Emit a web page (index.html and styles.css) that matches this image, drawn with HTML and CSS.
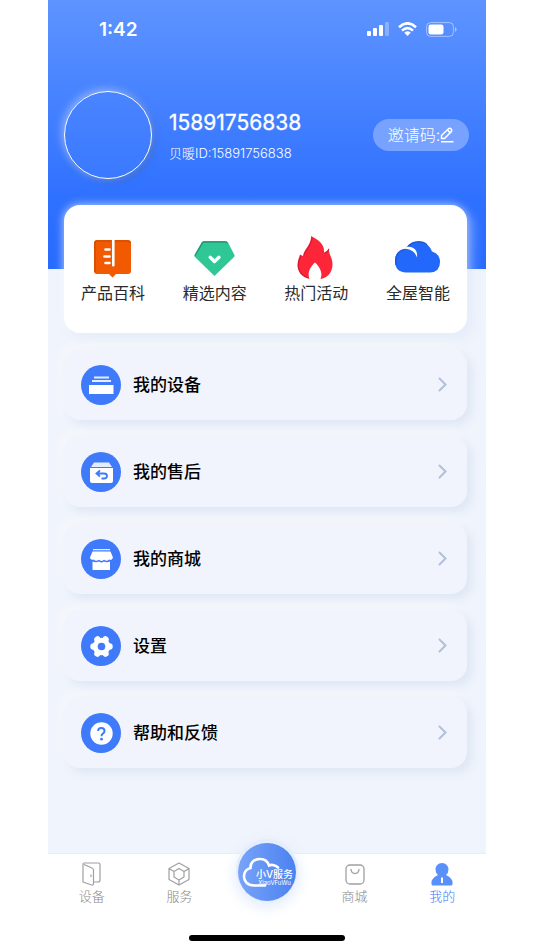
FILE: index.html
```html
<!DOCTYPE html>
<html lang="zh-CN">
<head>
<meta charset="utf-8">
<meta name="viewport" content="width=device-width, initial-scale=1">
<title>我的</title>
<link rel="stylesheet" href="styles.css">
</head>
<body>
<div class="screen">
  <header class="hero">
    <div class="status">
      <time class="clock">1:42</time>
      <div class="signals">
        <svg width="22" height="14" viewBox="0 0 22 14" fill="#fff" aria-hidden="true"><rect x="0" y="9" width="4" height="5" rx="1"/><rect x="6" y="6" width="4" height="8" rx="1"/><rect x="12" y="3" width="4" height="11" rx="1"/><rect x="18" y="0" width="4" height="14" rx="1" opacity=".3"/></svg>
        <svg width="19" height="14" viewBox="0 0 19 14" aria-hidden="true"><g fill="none" stroke="#fff" stroke-width="2.600"><path d="M1 5.200Q9.500-2.600 18 5.200"/><path d="M4 8.600Q9.500 3.600 15 8.600"/></g><path d="M6.300 10.700Q9.500 8 12.700 10.700L9.500 14Z" fill="#fff"/></svg>
        <svg width="31" height="15" viewBox="0 0 31 15" aria-hidden="true"><rect x=".6" y=".6" width="26.800" height="13.800" rx="4" fill="none" stroke="#fff" stroke-opacity=".45"/><rect x="2.500" y="2.500" width="15" height="10" rx="2.200" fill="#fff"/><path d="M29 5.200q1.600.6 1.600 2.300T29 9.800z" fill="#fff" opacity=".5"/></svg>
      </div>
    </div>
    <div class="profile">
      <div class="avatar"></div>
      <div class="who">
        <h1 class="name">15891756838</h1>
        <p class="uid">贝暖ID:15891756838</p>
      </div>
      <button class="invite" type="button">邀请码:<svg width="14" height="16" viewBox="0 0 14 16" fill="none" stroke="#fff" stroke-width="1.500" stroke-linejoin="round" aria-hidden="true"><path d="M1.500 11.500V8.500L8.500 1.700Q9.800.7 11 1.900T11.300 4.600L4.500 11.500ZM7.500 3l2.600 2.700M1 14.800h12.500"/></svg></button>
    </div>
  </header>

  <main class="content">
    <nav class="quick">
      <a class="quick-item" href="#wiki">
        <svg width="46" height="46" viewBox="0 0 46 46" aria-hidden="true"><path d="M7 4H38Q41 4 41 7V35Q41 38 38 38H26L22.500 41.500L19 38H7Q4 38 4 35V7Q4 4 7 4Z" fill="#f15a00"/><path d="M5 36V7Q5 5 7 5H21M24.500 5H38Q40 5 40 7" fill="none" stroke="#b84600" stroke-width="1.200" opacity=".75"/><rect x="22" y="3" width="2.600" height="27.500" rx="1" fill="#fff"/><path d="M15.500 13.500h4M14.500 20.500h5M15.500 27h4" stroke="#fff" stroke-width="2.600" stroke-linecap="round"/></svg>
        <span>产品百科</span>
      </a>
      <a class="quick-item" href="#picks">
        <svg width="46" height="46" viewBox="0 0 46 46" aria-hidden="true"><path d="M12 5H33.500Q35 5 36 6.500L42.500 19Q42.800 20 42 21L22.500 40L3 21Q2 20 2.500 19L9.500 6.500Q10.500 5 12 5Z" fill="#2fc796"/><path d="M3 19.500L10.500 6.800Q11 6 12 6H33.500Q34.500 6 35.500 7.500" fill="none" stroke="#229970" stroke-width="1.300"/><path d="M18.200 21.300L22.500 25.500L27 21.300" fill="none" stroke="#fff" stroke-width="3.400" stroke-linecap="round" stroke-linejoin="round"/></svg>
        <span>精选内容</span>
      </a>
      <a class="quick-item" href="#events">
        <svg width="46" height="46" viewBox="0 0 46 46" aria-hidden="true"><path d="M18 0C26 4 32 9 31 16.500C33.500 16 35 14 36 12C35.500 19 39.500 21 39.500 28C39.500 37 34 42 27.500 43C30 37 27 31 22 26.500C17 31 14 37 16.500 43C9 41 4.500 36 4.500 29C4.500 25 6 22 7 18.500L10 20C11 13 18.500 9 18 0Z" fill="#fd2638"/><path d="M8 20C2 31 7 39 15 42M11 19C13 13 19 9 19 2M32 17Q35 16 36 13" fill="none" stroke="#b91833" stroke-width="1.100" opacity=".65"/></svg>
        <span>热门活动</span>
      </a>
      <a class="quick-item" href="#home">
        <svg width="46" height="46" viewBox="0 0 46 46" aria-hidden="true"><path d="M11 36.500Q0 36 0 25Q0 14 11 12.500C15 3 32 1.500 37 15.500Q45 18 45 26Q45 36 35 36.500Z" fill="#2168fb"/><path d="M1 29C-1 19 4 14.500 10 13.500M13 10.500C18 5 27 4 32 8.500" fill="none" stroke="#164bc0" stroke-width="1.200" opacity=".7"/><path d="M10 12.800L12 11C19 10 23 15 22 21.500C20 16 17 13.500 10 12.800Z" fill="#fff"/></svg>
        <span>全屋智能</span>
      </a>
    </nav>

    <nav class="menu">
      <a class="row" href="#devices">
        <svg class="badge" viewBox="0 0 40 40" aria-hidden="true"><circle cx="20" cy="20" r="20" fill="#3f7afb"/><path d="M13 11.500h15v2H13zM11 15h19v2H11z" fill="#e3edff"/><path d="M8 20h24.500v9H8z" fill="#fff"/></svg>
        <span class="row-label">我的设备</span>
        <svg class="chevron" viewBox="0 0 9 15" aria-hidden="true"><path d="M1.500 1.500L7.500 7.500L1.500 13.500"/></svg>
      </a>
      <a class="row" href="#service">
        <svg class="badge" viewBox="0 0 40 40" aria-hidden="true"><circle cx="20" cy="20" r="20" fill="#3f7afb"/><path d="M13 10.500H28L31 15H10Z" fill="#e3edff"/><path d="M9 16H32V29Q32 31 30 31H11Q9 31 9 29Z" fill="#fff"/><path d="M19 18.500L15.500 21.500L19 24.500M16 21.500H23Q26 21.500 26 24T23 26.500H20.500" fill="none" stroke="#3f7afb" stroke-width="1.800"/></svg>
        <span class="row-label">我的售后</span>
        <svg class="chevron" viewBox="0 0 9 15" aria-hidden="true"><path d="M1.500 1.500L7.500 7.500L1.500 13.500"/></svg>
      </a>
      <a class="row" href="#mall">
        <svg class="badge" viewBox="0 0 40 40" aria-hidden="true"><circle cx="20" cy="20" r="20" fill="#3f7afb"/><path d="M12 10h17v1.300H12z" fill="#e3edff"/><path d="M11.500 12.500H29.500L32 18.500Q31 22 28 20.500Q26 22.800 23.200 20.800Q20.500 23 18 20.800Q15 22.800 12.500 20.500Q9.500 21.500 9 18.500Z" fill="#fff"/><path d="M11.500 22.500Q15 24 18 22.500Q20.500 24.500 23 22.500Q26 24 29 22.500V31H11.500Z" fill="#fff"/></svg>
        <span class="row-label">我的商城</span>
        <svg class="chevron" viewBox="0 0 9 15" aria-hidden="true"><path d="M1.500 1.500L7.500 7.500L1.500 13.500"/></svg>
      </a>
      <a class="row" href="#settings">
        <svg class="badge" viewBox="0 0 40 40" aria-hidden="true"><circle cx="20" cy="20" r="20" fill="#3f7afb"/><g stroke="#fff" stroke-width="6.500" stroke-linecap="round"><path d="M12.500 20.500h16M16.500 13.500l8 14M24.500 13.500l-8 14"/></g><circle cx="20.500" cy="20.500" r="8.800" fill="#fff"/><circle cx="20.500" cy="20.500" r="3.800" fill="#3f7afb"/></svg>
        <span class="row-label">设置</span>
        <svg class="chevron" viewBox="0 0 9 15" aria-hidden="true"><path d="M1.500 1.500L7.500 7.500L1.500 13.500"/></svg>
      </a>
      <a class="row" href="#help">
        <svg class="badge" viewBox="0 0 40 40" aria-hidden="true"><circle cx="20" cy="20" r="20" fill="#3f7afb"/><circle cx="20.500" cy="20.500" r="11.200" fill="#fff"/><path d="M17.200 18Q17 15 20.300 15Q23.500 15 23.500 18Q23.500 19.500 21.800 20.600Q20.500 21.400 20.500 23.200" fill="none" stroke="#3f7afb" stroke-width="2"/><circle cx="20.500" cy="26.200" r="1.400" fill="#3f7afb"/></svg>
        <span class="row-label">帮助和反馈</span>
        <svg class="chevron" viewBox="0 0 9 15" aria-hidden="true"><path d="M1.500 1.500L7.500 7.500L1.500 13.500"/></svg>
      </a>
    </nav>
  </main>

  <footer class="dock">
    <nav class="tabs">
      <a class="tab" href="#t1"><svg width="24" height="24" viewBox="0 0 24 24" fill="none" stroke="#a0a0a0" stroke-width="1.200" stroke-linejoin="round" aria-hidden="true"><path d="M4 1H18.500Q20 1 20 2.500V18Q20 20 18 20H14M4 1Q3 1 3 2.500V20L11.500 23Q13.500 23.500 13.500 21.500V8Q13.500 6.500 12 6L4 2.500M11 12.500v2.500"/></svg><span>设备</span></a>
      <a class="tab" href="#t2"><svg width="24" height="24" viewBox="0 0 24 24" fill="none" stroke="#a0a0a0" stroke-width="1.200" stroke-linejoin="round" aria-hidden="true"><path d="M12 1L22 6.500V17.500L12 23L2 17.500V6.500ZM12 6.500L17 9.500V15L12 18L7 15V9.500ZM2 6.500L7 9.500M22 6.500L17 9.500M12 18V23"/></svg><span>服务</span></a>
      <a class="orb" href="#v"><svg class="orb-cloud" viewBox="0 0 58 58" fill="none" stroke="#fff" stroke-width="2.600" stroke-linecap="round" aria-hidden="true"><path d="M27 42.500H16C9 42.500 6 38 6 33.500C6 28.500 9 26 12.500 25C12 19 17 16 22 16C27 16 30 19 31 22.500C34 21 38 22.500 40 24.500"/></svg><span class="orb-text"><b>小V服务</b><small>XiaoVFuWu</small></span></a>
      <a class="tab" href="#t3"><svg width="24" height="24" viewBox="0 0 24 24" fill="none" stroke="#a0a0a0" stroke-width="1.300" stroke-linecap="round" aria-hidden="true"><rect x="3" y="3" width="18" height="19" rx="4"/><path d="M8 7.500Q8.500 11.500 12 11.500T16 7.500"/></svg><span>商城</span></a>
      <a class="tab active" href="#t4" aria-current="page"><svg width="24" height="24" viewBox="0 0 24 24" aria-hidden="true"><path d="M12 1C16 1 18.500 4 18.500 7.500Q18.500 11 16 13Q20 14.500 22 18Q22.500 19 22.500 20V22Q22.500 23.500 21 23.500H3Q1.500 23.500 1.500 22V20Q1.500 19 2 18Q4 14.500 8 13Q5.500 11 5.500 7.500C5.500 4 8 1 12 1Z" fill="#5a90fa"/><path d="M11 15.500h2v5.500h-2z" fill="#fff"/></svg><span>我的</span></a>
    </nav>
    <div class="home-bar"></div>
  </footer>
</div>
</body>
</html>
```
FILE: styles.css
```css
* { box-sizing: border-box; }

body {
  margin: 0;
  padding: 0 48px;
  background: #fff;
  font-family: Inter, "Noto Sans CJK SC", sans-serif;
  color: #2a2a2a;
}

a { color: inherit; text-decoration: none; }
svg { display: block; flex: none; }

.screen {
  min-height: 100vh;
  display: flex;
  flex-direction: column;
  background: #f0f4fc;
}

.hero {
  padding: 0 17px 90px 16px;
  background: linear-gradient(#5e94ff, #2e70ff 75%, #286bff);
  color: #fff;
}

.status {
  display: flex;
  align-items: center;
  justify-content: space-between;
  height: 58px;
  padding: 0 12px 0 35px;
}

.clock { font-size: 19px; font-weight: 600; }
.signals { display: flex; align-items: center; gap: 9px; }

.profile {
  display: flex;
  align-items: center;
  padding-top: 33px;
}

.avatar {
  width: 88px;
  height: 88px;
  flex: none;
  border: 1px solid #fff;
  border-radius: 50%;
  background: linear-gradient(#4a85ff, #3a79ff);
  box-shadow: -2px -2px 8px #8fb4ff, 2px 2px 8px #3a68c8;
}

.who { flex: 1; margin-left: 17px; padding-top: 2px; }
.name { margin: 0; font-size: 21px; line-height: 28px; font-weight: 400; -webkit-text-stroke: 0.3px #fff; }
.uid { margin: 6px 0 0; font-size: 13px; line-height: 20px; font-weight: 300; }

.invite {
  display: flex;
  align-items: center;
  justify-content: center;
  width: 96px;
  height: 32px;
  padding: 0;
  border: 0;
  border-radius: 16px;
  background: #77a2ff;
  color: #fff;
  font: 300 16px/24px Inter, "Noto Sans CJK SC", sans-serif;
  white-space: nowrap;
}

.content { padding: 0 19px 16px 16px; }

.quick {
  display: flex;
  justify-content: space-between;
  height: 128px;
  margin-top: -64px;
  padding: 31px 17px 0;
  border-radius: 16px;
  background: #fff;
  box-shadow: 6px 6px 12px #d4e0f566, -1px -1px 8px #ffffff90;
}

.quick-item {
  display: flex;
  flex-direction: column;
  align-items: center;
  width: 64px;
  font-size: 16px;
  line-height: 22px;
  white-space: nowrap;
}

.menu {
  display: flex;
  flex-direction: column;
  gap: 16px;
  margin-top: 16px;
}

.row {
  display: flex;
  align-items: center;
  height: 71px;
  padding: 0 20px 0 17px;
  border-radius: 16px;
  background: #f1f4fc;
  box-shadow: 5px 5px 10px #dee7f5, -5px -5px 10px #f5f7fb;
}

.badge { width: 40px; height: 40px; }

.row-label {
  flex: 1;
  margin-left: 12px;
  font-size: 17px;
  line-height: 24px;
  font-weight: 500;
  color: #000;
}

.chevron {
  width: 9px;
  height: 15px;
  fill: none;
  stroke: #b0c0db;
  stroke-width: 2;
  stroke-linecap: round;
}

.dock {
  margin-top: auto;
  border-top: 1px solid #e8edf5;
  background: #fff;
}

.tabs {
  display: grid;
  grid-template-columns: repeat(5, 1fr);
  height: 81px;
}

.tab {
  display: flex;
  flex-direction: column;
  align-items: center;
  padding-top: 8px;
  font-size: 13px;
  line-height: 20px;
  font-weight: 300;
  color: #888;
}

.active { color: #3f7cf5; }

.orb {
  position: relative;
  justify-self: center;
  width: 58px;
  height: 58px;
  margin-top: -11px;
  border-radius: 50%;
  background: linear-gradient(90deg, #78a3f8, #4b82f1);
  box-shadow: 0 -2px 0 2px #e4edfc, 0 3px 16px 2px #dce8ff;
  color: #fff;
}

.orb-cloud { width: 58px; height: 58px; }

.orb-text {
  position: absolute;
  left: 18px;
  top: 25px;
  display: flex;
  flex-direction: column;
  align-items: center;
  white-space: nowrap;
}

.orb-text b { font-size: 10px; line-height: 12px; font-weight: 500; }
.orb-text small { font-size: 6px; line-height: 6px; }

.home-bar {
  width: 156px;
  height: 6px;
  margin: 0 auto 9px;
  border-radius: 3px;
  background: #000;
}
```
